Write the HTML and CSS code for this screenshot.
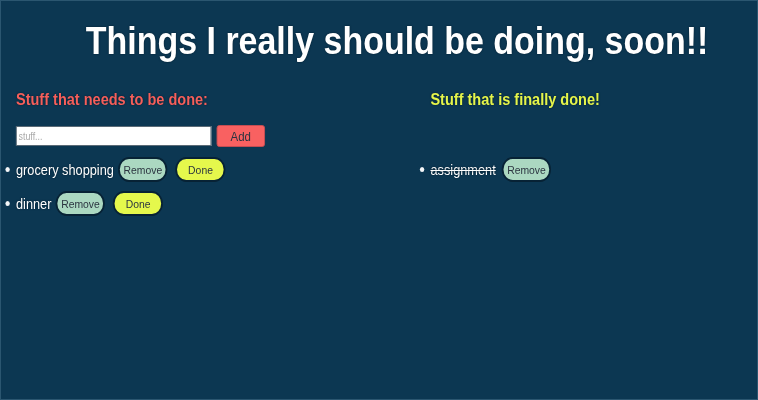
FILE: index.html
```html
<!DOCTYPE html>
<html>
<head>
<meta charset="utf-8">
<link rel="stylesheet" href="styles.css">
</head>
<body>
<h1 class="title">Things I really should be doing, soon!!</h1>
<div class="frame">
  <div class="columns">
    <section class="col col-todo">
      <h2 class="heading heading-todo">Stuff that needs to be done:</h2>
      <form class="add-form">
        <input class="add-input" type="text" placeholder="stuff...">
        <button class="btn btn-add" type="button">Add</button>
      </form>
      <ul class="list">
        <li class="item"><span class="item-text">grocery shopping</span><button class="btn btn-remove" type="button">Remove</button><button class="btn btn-done" type="button">Done</button></li>
        <li class="item"><span class="item-text">dinner</span><button class="btn btn-remove" type="button">Remove</button><button class="btn btn-done" type="button">Done</button></li>
      </ul>
    </section>
    <section class="col col-done">
      <h2 class="heading heading-done">Stuff that is finally done!</h2>
      <ul class="list list-done">
        <li class="item"><span class="item-text done-text">assignment</span><button class="btn btn-remove" type="button">Remove</button></li>
      </ul>
    </section>
  </div>
</div>
</body>
</html>
```
FILE: styles.css
```css
html, body {
  margin: 0;
  padding: 0;
}
body {
  box-sizing: border-box;
  width: 758px;
  height: 400px;
  overflow: hidden;
  background: #0c3752;
  border: 1px solid #2b5670;
  font-family: "Liberation Sans", Arial, sans-serif;
  color: #fff;
}
/* text on this page is rendered horizontally condensed */
.title {
  margin: 18px 0 0 0;
  padding-left: 41px;
  text-align: center;
  font-size: 38.6px;
  line-height: 44px;
  font-weight: bold;
  white-space: nowrap;
  text-shadow: 0 0 2px #041b2b;
  transform: scaleX(0.88);
}
.frame {
  transform: scaleX(0.88);
  transform-origin: 0 0;
}
.columns {
  display: grid;
  grid-template-columns: 470px 1fr;
}
.col-todo {
  padding-left: 17px;
}
.col-done {
  padding-left: 18px;
}
.heading {
  margin: 26px 0 0 0;
  font-size: 16.5px;
  line-height: 20px;
  font-weight: bold;
  text-shadow: 0 0 2px #041b2b;
}
.heading-todo { color: #f55f5b; }
.heading-done { color: #e5f54b; }
.add-form {
  display: flex;
  align-items: center;
  gap: 6px;
  margin: 16px 0 0 0;
  height: 22px;
}
.add-input {
  box-sizing: border-box;
  width: 222px;
  height: 20px;
  margin: 0;
  border: 1px solid #5a6a76;
  padding: 0 2px;
  font-family: inherit;
  font-size: 10px;
  color: #333;
  background: #fff;
}
.add-input::placeholder { color: #a8a8a8; }
.btn {
  font-family: inherit;
  color: #2b3440;
  cursor: pointer;
  padding: 0;
  margin: 0;
}
.btn-add {
  box-sizing: border-box;
  width: 55px;
  height: 22px;
  background: #f96161;
  border: 1px solid #c94e52;
  border-radius: 3px;
  font-size: 13px;
}
.list {
  display: flex;
  flex-direction: column;
  gap: 9px;
  margin: 10px 0 0 0;
  padding: 0;
  list-style: none;
}
.list-done {
  margin-top: 48px;
}
.item {
  position: relative;
  display: flex;
  align-items: center;
  height: 25px;
  font-size: 14.5px;
  text-shadow: 0 0 2px #041b2b;
}
.item::before {
  content: "";
  position: absolute;
  left: -12px;
  top: 10px;
  width: 5px;
  height: 5px;
  border-radius: 50%;
  background: #f4f6f8;
}
.item-text { margin-right: 5px; }
.done-text {
  text-decoration: line-through;
  margin-right: 7px;
}
.btn-remove,
.btn-done {
  box-sizing: border-box;
  height: 25px;
  border: 2px solid #072235;
  border-radius: 13px;
  font-size: 11.8px;
  text-shadow: none;
}
.btn-remove {
  width: 56px;
  margin-right: 9px;
  background: #abd8c1;
}
.btn-done {
  width: 57px;
  background: #e5f84c;
}
```
